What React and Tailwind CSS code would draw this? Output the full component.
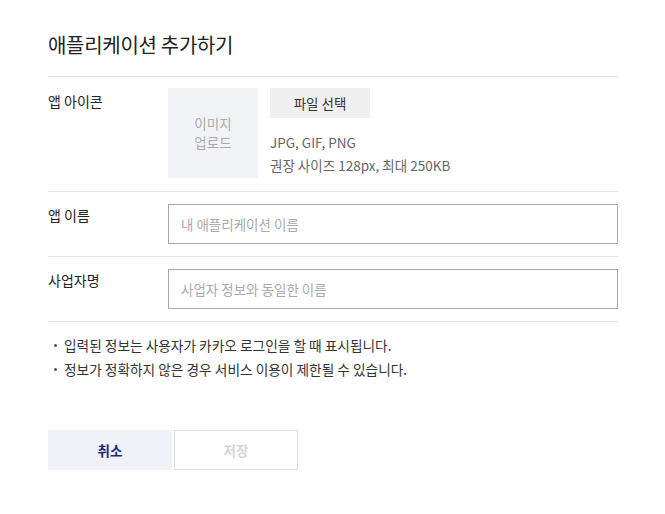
import React from "react";

const font = { fontFamily: '"Noto Sans CJK KR", "Noto Sans", sans-serif' };

export default function App() {
  return (
    <div className="w-[665px] h-[514px] bg-white" style={font}>
      <div className="w-[570px] ml-[48px] pt-[31px]">
        <h1 className="text-[20px] leading-[28px] text-[#222] font-normal tracking-[-0.3px] pb-[17px]">
          애플리케이션 추가하기
        </h1>
        <div className="border-t border-[#e5e5e5]" />

        {/* Row: app icon */}
        <div className="flex pt-[11px] pb-[13px] border-b border-[#e5e5e5]">
          <div className="w-[120px] text-[14px] leading-[20px] text-[#222] pt-[3px]">앱 아이콘</div>
          <div className="w-[90px] h-[90px] bg-[#f2f3f7] flex flex-col items-center justify-center text-center text-[13.5px] text-[#aaa]">
            <div className="leading-[19px]">이미지</div>
            <div className="leading-[19px]">업로드</div>
          </div>
          <div className="ml-[12px] flex flex-col">
            <button className="w-[100px] h-[30px] bg-[#f0f0f0] text-[13.5px] text-[#333]">파일 선택</button>
            <div className="mt-[13px] text-[13.5px] leading-[23px] text-[#666]">JPG, GIF, PNG</div>
            <div className="text-[13.5px] leading-[23px] text-[#666]">권장 사이즈 128px, 최대 250KB</div>
          </div>
        </div>

        {/* Row: app name */}
        <div className="flex pt-[12px] pb-[12px] border-b border-[#e5e5e5]">
          <div className="w-[120px] text-[14px] leading-[20px] text-[#222] pt-[1px]">앱 이름</div>
          <div className="flex-1 h-[40px] border border-[#a9a9a9] flex items-center px-[12px] text-[13.5px] text-[#aaa]">
            내 애플리케이션 이름
          </div>
        </div>

        {/* Row: business name */}
        <div className="flex pt-[12px] pb-[12px] border-b border-[#e5e5e5]">
          <div className="w-[120px] text-[14px] leading-[20px] text-[#222] pt-[1px]">사업자명</div>
          <div className="flex-1 h-[40px] border border-[#a9a9a9] flex items-center px-[12px] text-[13.5px] text-[#aaa]">
            사업자 정보와 동일한 이름
          </div>
        </div>

        <ul className="pt-[11px] text-[13.7px] leading-[24px] text-[#333]">
          <li className="flex items-center">
            <span className="w-[3px] h-[3px] rounded-full bg-[#555] ml-[6px] mr-[7px]" />
            입력된 정보는 사용자가 카카오 로그인을 할 때 표시됩니다.
          </li>
          <li className="flex items-center">
            <span className="w-[3px] h-[3px] rounded-full bg-[#555] ml-[6px] mr-[7px]" />
            정보가 정확하지 않은 경우 서비스 이용이 제한될 수 있습니다.
          </li>
        </ul>

        <div className="flex gap-[2px] mt-[49px]">
          <button className="w-[124px] h-[40px] bg-[#f1f2f8] text-[13.5px] font-bold text-[#1d2a7a]">취소</button>
          <button className="w-[124px] h-[40px] border border-[#dcdcdc] bg-white text-[13.5px] font-bold text-[#d5d5d5]">
            저장
          </button>
        </div>
      </div>
    </div>
  );
}
